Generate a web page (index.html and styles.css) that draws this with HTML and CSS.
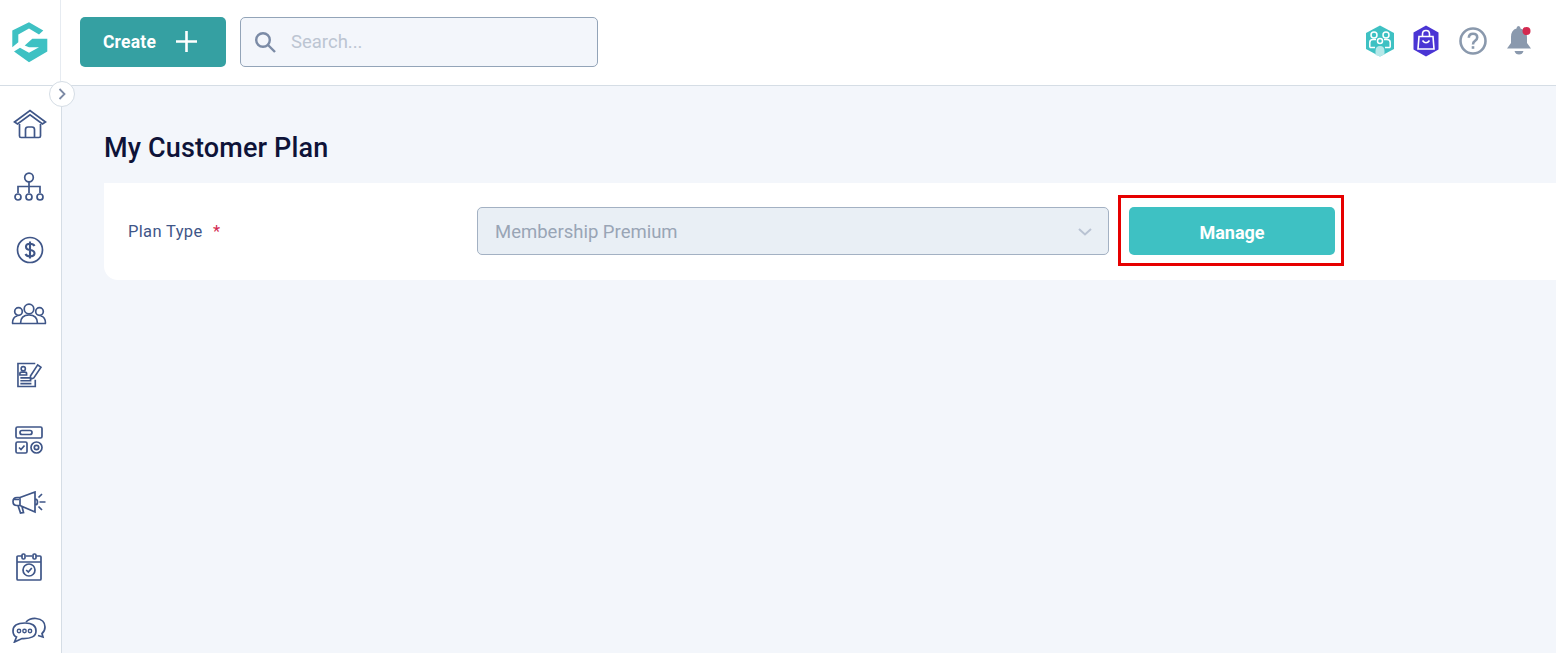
FILE: index.html
```html
<!DOCTYPE html>
<html lang="en">
<head>
  <meta charset="UTF-8">
  <title>My Customer Plan</title>
  <meta name="viewport" content="width=device-width, initial-scale=1">
  <link rel="stylesheet" href="styles.css">
</head>
<body>
  <!-- Top bar -->
  <header class="topbar">
    <div class="logo-cell">
      <svg width="36" height="41" viewBox="13 21.500 36 41">
        <path class="logo" d="M30 21.700 L44.300 30 L40 34 L30 28 L19.300 34 V41.700 L13.300 46.700 V30 Z"/>
        <path class="logo" d="M15 51 L21 47.300 L30 52.300 L40 46.700 H30 L25.700 45 L33.300 38.300 H48.300 V51 L30 61.700 Z"/>
      </svg>
    </div>
    <div class="topbar-main">
      <button class="create-btn">
        <span>Create</span>
        <svg width="21" height="21" viewBox="0 0 21 21"><path d="M10.500 0 V21 M0 10.500 H21" stroke="#fff" stroke-width="2.600"/></svg>
      </button>
      <div class="search">
        <svg width="22" height="22" viewBox="0 0 22 22" fill="none" stroke="#7b8ba6" stroke-width="2.400"><circle cx="9" cy="9" r="6.800"/><path d="M13.500 13.500 L21 21"/></svg>
        <span class="search-text">Search...</span>
      </div>
      <div class="top-icons">
        <svg width="30" height="32" viewBox="0 0 30 32">
          <path d="M15 0.500 L29 8 V24 L15 31.500 L1 24 V8 Z" fill="#3ec1c3"/>
          <g fill="none" stroke="#fff" stroke-width="1.500">
            <circle cx="9" cy="10" r="3"/><circle cx="21" cy="10" r="3"/>
            <path d="M4.800 22.500 V17.500 Q4.800 14.500 8 14.500 H11 M25.200 22.500 V17.500 Q25.200 14.500 22 14.500 H19 M4.800 22.500 H10 M20 22.500 H25.200"/>
            <circle cx="15" cy="16" r="2.500"/>
          </g>
          <path d="M10.500 30 V26 Q10.500 21 15 21 Q19.500 21 19.500 26 V29.500 L15 31.500 Z" fill="#b5e8e9"/>
        </svg>
        <svg width="26" height="32" viewBox="0 0 26 32">
          <path d="M13 0.500 L25.500 7.500 V24.500 L13 31.500 L0.500 24.500 V7.500 Z" fill="#4a35d4"/>
          <g fill="none" stroke="#fff" stroke-width="1.600">
            <path d="M6 11.500 H20 L21 24 H5 Z"/>
            <path d="M9.500 11.500 V9 Q9.500 5.500 13 5.500 Q16.500 5.500 16.500 9 V11.500"/>
            <path d="M9.500 15.500 Q13 20 16.500 15.500"/>
          </g>
        </svg>
        <svg class="help-icon" width="28" height="28" viewBox="0 0 28 28" fill="none" stroke="#8a99ad" stroke-width="2.600">
          <circle cx="14" cy="14" r="12.500"/>
          <path d="M9.800 10.800 Q10 6.800 14 6.800 Q18.200 6.800 18.200 10.500 Q18.200 12.500 16 13.800 Q14 15 14 17.500"/>
          <path d="M14 19.200 V21.800"/>
        </svg>
        <svg width="28" height="32" viewBox="0 0 28 32">
          <path d="M13.500 1 Q15.500 1 15.500 3.500 Q22 5 22 12.500 V18 L26 23.500 H2 L6 18 V12 Q6 5 11.500 3.500 Q11.500 1 13.500 1 Z" fill="#8a99ad"/>
          <path d="M9.500 26 H18.500 Q17.500 29.500 14 29.500 Q10.500 29.500 9.500 26 Z" fill="#8a99ad"/>
          <circle cx="21.500" cy="6" r="4" fill="#d3294f"/>
        </svg>
      </div>
    </div>
  </header>

  <div class="body-row">
    <!-- Left nav -->
    <nav class="sidebar">
      <button class="nav-toggle">
        <svg width="8" height="12" viewBox="0 0 8 12" fill="none" stroke="#7c8aa5" stroke-width="1.800"><path d="M1.500 1 L6.500 6 L1.500 11"/></svg>
      </button>
      <div class="nav-item nav-item-right">
        <svg width="34" height="30" viewBox="0 0 34 30"><path d="M1.500 13 L17 1.500 L32.500 13 L29.500 15 L17 5.800 L4.500 15 Z"/><path d="M6.500 15 V27 Q6.500 28.500 8 28.500 H26 Q27.500 28.500 27.500 27 V15 M12.500 28.500 V20.500 Q12.500 18 15 18 H19 Q21.500 18 21.500 20.500 V28.500"/></svg>
      </div>
      <div class="nav-item">
        <svg width="30" height="30" viewBox="0 0 30 30"><circle cx="15" cy="5.500" r="4.300"/><path d="M15 10 V21 M4 21 V14.500 H26 V21"/><circle cx="4" cy="25" r="3"/><circle cx="15" cy="25" r="3"/><circle cx="26" cy="25" r="3"/></svg>
      </div>
      <div class="nav-item nav-item-right">
        <svg width="28" height="28" viewBox="0 0 28 28"><circle cx="14" cy="14" r="12.500"/><path class="thick" d="M18.500 10 Q17.500 7.800 14 7.800 Q10 7.800 10 10.800 Q10 13.500 14 14 Q18.500 14.500 18.500 17.300 Q18.500 20.300 14 20.300 Q10.500 20.300 9.500 18 M14 5.500 V22.500"/></svg>
      </div>
      <div class="nav-item">
        <svg width="36" height="22" viewBox="0 0 36 22"><circle cx="18" cy="6" r="4.800"/><circle cx="7.500" cy="8.500" r="3.800"/><circle cx="28.500" cy="8.500" r="3.800"/><path d="M1 20.500 H35 M1.500 20.500 Q1.500 13.500 6.500 13 M34.500 20.500 Q34.500 13.500 29.500 13 M9.500 20.500 Q9.500 12 18 12 Q26.500 12 26.500 20.500"/></svg>
      </div>
      <div class="nav-item nav-item-up">
        <svg width="25" height="26" viewBox="0 0 26 26"><path d="M19 1 H1 V25 H19 V18"/><circle cx="6.500" cy="6.500" r="2.200"/><path d="M3 13 V11.500 Q3 10 5 10 H8 Q10 10 10 11.500 V13 Z M3.500 16 H15 M3.500 19 H15 M3.500 22 H15"/><path d="M14 14 L21.500 2.500 L25 5 L17.500 16 L14 17.500 Z"/></svg>
      </div>
      <div class="nav-item">
        <svg width="28" height="28" viewBox="0 0 28 28"><rect x="1" y="1" width="26" height="11" rx="1.500"/><rect x="5" y="4.500" width="12" height="4" rx="2"/><rect x="1" y="16" width="11" height="11" rx="1.500"/><path d="M4 21.500 L6 23.500 L9.500 19.500"/><circle cx="21.500" cy="21.500" r="5.500"/><circle cx="21.500" cy="21.500" r="2.200"/></svg>
      </div>
      <div class="nav-item">
        <svg width="34" height="24" viewBox="0 0 34 24"><path d="M8 6.500 H5 Q1 6.500 1 10.500 Q1 14.500 5 14.500 H8 Z M8 6.500 L23 1 V21 L8 14.500 M6 14.500 L8.500 22 L11.500 21.500 L10 15.500 M7 8.500 H2 M23 8 Q25.500 8 25.500 11 Q25.500 14 23 14 M27.500 11 H33.500 M26.500 6.500 L30 3 M26.500 15.500 L30 19"/></svg>
      </div>
      <div class="nav-item">
        <svg width="26" height="28" viewBox="0 0 26 28"><path d="M6 3 H2 Q1 3 1 4 V26 Q1 27 2 27 H24 Q25 27 25 26 V4 Q25 3 24 3 H20 M10 3 H16 M1 9 H25"/><rect x="6" y="1" width="3" height="5" rx="1.200"/><rect x="17" y="1" width="3" height="5" rx="1.200"/><circle cx="13" cy="17" r="6"/><path d="M10.200 17 L12.300 19 L15.800 15"/></svg>
      </div>
      <div class="nav-item">
        <svg width="34" height="26" viewBox="0 0 34 26"><path d="M14 5 Q18 1 24 1.500 Q33 2.500 33 10 Q33 14 30 16.500 L31 20 L26 18.500"/><path d="M13 6 Q1 6 1 14 Q1 18.500 4.500 20 L2.500 25 L10 21.500 Q24 22 24 14 Q24 6 13 6 Z"/><circle class="dot" cx="7" cy="14" r="1.700"/><circle class="dot" cx="12.500" cy="14" r="1.700"/><circle class="dot" cx="18" cy="14" r="1.700"/></svg>
      </div>
    </nav>

    <!-- Page content -->
    <main class="content">
      <h1 class="page-title">My Customer Plan</h1>
      <section class="plan-card">
        <label class="plan-label">Plan Type <span class="req">*</span></label>
        <div class="plan-select">
          <span>Membership Premium</span>
          <svg width="14" height="8" viewBox="0 0 14 8" fill="none" stroke="#b9c3d3" stroke-width="2"><path d="M1 1 L7 6.500 L13 1"/></svg>
        </div>
        <div class="highlight">
          <button class="manage-btn">Manage</button>
        </div>
      </section>
    </main>
  </div>
</body>
</html>
```

FILE: styles.css
```css
* { box-sizing: border-box; }
html, body {
  margin: 0;
  height: 100%;
  overflow: hidden;
}
body {
  font-family: "Roboto", "Liberation Sans", sans-serif;
  background: #f3f6fb;
  color: #0e1338;
  display: flex;
  flex-direction: column;
}
button {
  font-family: inherit;
  border: none;
  cursor: pointer;
}

/* ====== Top bar ====== */
.topbar {
  height: 86px;
  flex: none;
  display: flex;
  background: #fff;
  border-bottom: 1px solid #d5dde5;
}
.logo-cell {
  width: 61px;
  flex: none;
  display: flex;
  align-items: center;
  justify-content: center;
  padding-bottom: 1px;
  border-right: 1px solid #e6ebf1;
}
.logo { fill: #3ec1c3; }
.topbar-main {
  flex: 1;
  display: flex;
  align-items: center;
  padding: 0 23px 2px 19px;
  gap: 14px;
}
.create-btn {
  width: 146px;
  height: 50px;
  display: flex;
  align-items: center;
  justify-content: center;
  gap: 20px;
  padding: 0 6px 0 0;
  background: #35a0a2;
  color: #fff;
  font-size: 17.500px;
  font-weight: 700;
  letter-spacing: 0.200px;
  border-radius: 5px;
}
.search {
  width: 358px;
  height: 50px;
  display: flex;
  align-items: center;
  gap: 15px;
  padding-left: 13px;
  background: #f3f6fb;
  border: 1px solid #93a4b8;
  border-radius: 5px;
}
.search-text {
  padding-top: 1px;
  color: #bcc5d2;
  font-size: 18.500px;
}
.top-icons {
  margin: 0 0 2px auto;
  display: flex;
  align-items: center;
  gap: 18px;
}
.help-icon { margin-left: 2px; }

/* ====== Sidebar ====== */
.body-row {
  flex: 1;
  display: flex;
  min-height: 0;
}
.sidebar {
  position: relative;
  width: 62px;
  flex: none;
  padding-top: 6px;
  background: #fff;
  border-right: 1px solid #d5dde5;
}
.nav-item {
  height: 63.300px;
  display: flex;
  align-items: center;
  justify-content: center;
  padding-right: 3px;
}
.nav-item-right { padding-right: 1px; }
.nav-item-up { padding-bottom: 3px; }
.nav-item svg {
  fill: none;
  stroke: #3f5688;
  stroke-width: 1.700;
}
.nav-item .thick { stroke-width: 2.100; }
.nav-item .dot { stroke-width: 1.400; }
.nav-toggle {
  position: absolute;
  top: -5px;
  left: 49px;
  width: 26px;
  height: 26px;
  display: flex;
  align-items: center;
  justify-content: center;
  padding: 0;
  background: #fff;
  border: 1px solid #d5dde5;
  border-radius: 50%;
  z-index: 2;
}

/* ====== Content ====== */
.content {
  flex: 1;
  min-width: 0;
  padding: 45px 0 0 42px;
}
.page-title {
  margin: 0 0 18px;
  height: 34px;
  line-height: 34px;
  font-size: 27px;
  font-weight: 500;
  letter-spacing: 0.150px;
  color: #0e1338;
}
.plan-card {
  height: 97px;
  display: flex;
  align-items: flex-start;
  padding: 12px 212px 0 24px;
  background: #fff;
  border-radius: 0 0 0 14px;
}
.plan-label {
  width: 349px;
  margin-top: 27px;
  line-height: 20px;
  font-size: 16.500px;
  letter-spacing: 0.350px;
  color: #3f5688;
}
.req {
  margin-left: 6px;
  color: #d3294f;
}
.plan-select {
  width: 632px;
  height: 48px;
  margin-top: 12px;
  display: flex;
  align-items: center;
  justify-content: space-between;
  padding: 2px 16px 0 17px;
  background: #e9eff5;
  border: 1px solid #a3b1c3;
  border-radius: 5px;
  color: #99a5b5;
  font-size: 18.500px;
}
.highlight {
  width: 226px;
  height: 71px;
  margin-left: 9px;
  padding: 9px 8px;
  border: 3px solid #e60000;
}
.manage-btn {
  width: 206px;
  height: 48px;
  padding: 3px 0 0;
  background: #3ec1c3;
  color: #fff;
  font-size: 18px;
  font-weight: 700;
  border-radius: 5px;
}
```
